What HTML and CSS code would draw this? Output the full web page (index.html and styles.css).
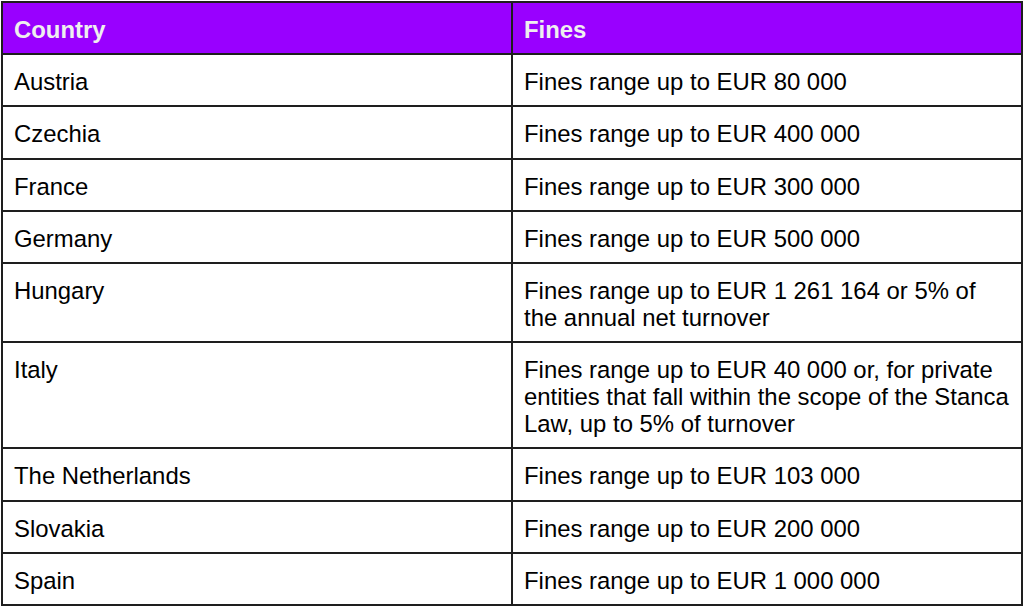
FILE: index.html
```html
<!DOCTYPE html>
<html lang="en">
<head>
<meta charset="utf-8">
<title>Fines by country</title>
<link rel="stylesheet" href="styles.css">
</head>
<body>
<table class="fines">
  <thead>
    <tr><th>Country</th><th>Fines</th></tr>
  </thead>
  <tbody>
    <tr><td>Austria</td><td>Fines range up to EUR 80 000</td></tr>
    <tr><td>Czechia</td><td>Fines range up to EUR 400 000</td></tr>
    <tr><td>France</td><td>Fines range up to EUR 300 000</td></tr>
    <tr><td>Germany</td><td>Fines range up to EUR 500 000</td></tr>
    <tr><td>Hungary</td><td>Fines range up to EUR 1 261 164 or 5% of the annual net turnover</td></tr>
    <tr><td>Italy</td><td>Fines range up to EUR 40 000 or, for private entities that fall within the scope of the Stanca Law, up to 5% of turnover</td></tr>
    <tr><td>The Netherlands</td><td>Fines range up to EUR 103 000</td></tr>
    <tr><td>Slovakia</td><td>Fines range up to EUR 200 000</td></tr>
    <tr><td>Spain</td><td>Fines range up to EUR 1 000 000</td></tr>
  </tbody>
</table>
</body>
</html>
```
FILE: styles.css
```css
html, body {
  margin: 0;
  padding: 0;
  background: #ffffff;
}

body {
  padding: 1px 0 0 1px;
}

.fines {
  width: 1022px;
  table-layout: fixed;
  border-collapse: separate;
  border-spacing: 0;
  border-top: 2px solid #1e1e1e;
  border-left: 2px solid #1e1e1e;
  font-family: "Liberation Sans", Arial, sans-serif;
  font-size: 23.9px;
  line-height: 27px;
  color: #000000;
}

.fines th,
.fines td {
  width: 50%;
  text-align: left;
  vertical-align: top;
  padding: 13px 9px 10.2px 11px;
  border-right: 2px solid #1e1e1e;
  border-bottom: 2px solid #1e1e1e;
}

.fines th {
  background: #9900ff;
  color: #efefef;
  font-weight: bold;
}
```
